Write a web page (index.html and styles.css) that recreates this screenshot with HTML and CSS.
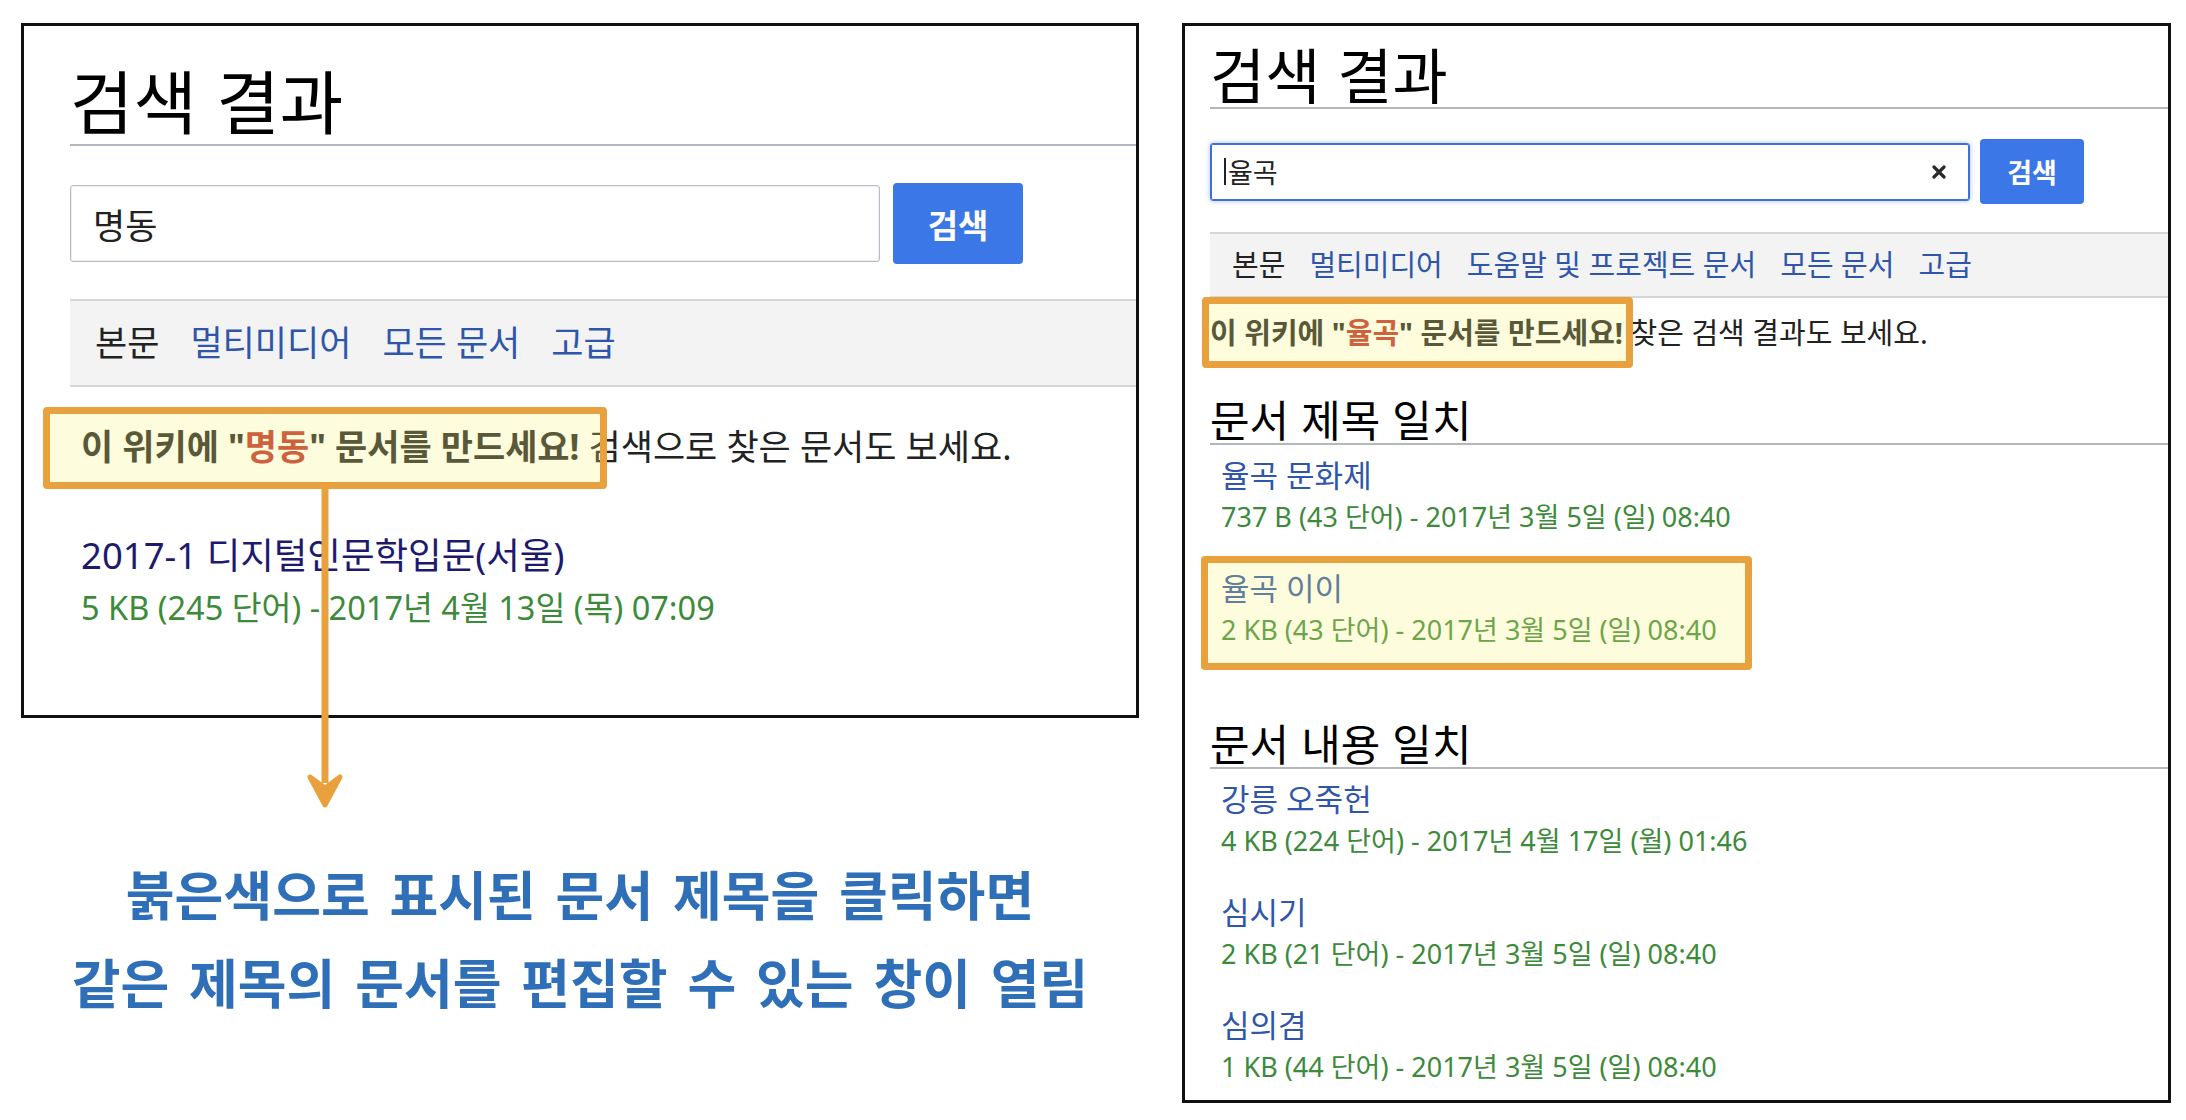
FILE: index.html
```html
<!DOCTYPE html>
<html lang="ko">
<head>
    <meta charset="UTF-8">
    <title>검색 결과 - 문서 만들기 안내</title>
    <link rel="stylesheet" href="styles.css">
</head>
<body>
    <div class="page">
        <!-- left: search with no exact match -->
        <div class="left-col">
            <div class="panel panel-lg">
                <h1 class="page-title">검색 결과</h1>
                <div class="search-row">
                    <div class="search-input"><span class="query">명동</span></div>
                    <div class="search-btn">검색</div>
                </div>
                <div class="tabs">
                    <span class="tab current">본문</span>
                    <a class="tab">멀티미디어</a>
                    <a class="tab">모든 문서</a>
                    <a class="tab">고급</a>
                </div>
                <p class="create-msg"><b class="mark">이 위키에 "<a class="new">명동</a>" 문서를 만드세요!</b> 검색으로 찾은 문서도 보세요.</p>
                <ul class="results">
                    <li>
                        <div class="result-heading"><a class="visited">2017-1 디지털인문학입문(서울)</a></div>
                        <div class="result-data">5 KB (245 단어) - 2017년 4월 13일 (목) 07:09</div>
                    </li>
                </ul>
            </div>

            <svg class="arrow" width="40" height="322" viewBox="0 0 40 322">
                <line x1="20" y1="0" x2="20" y2="296" stroke="#e8a13c" stroke-width="7"/>
                <path d="M20 318 L5 290 L20 301 L35 290 Z" fill="#e8a13c" stroke="#e8a13c" stroke-width="5" stroke-linejoin="round"/>
            </svg>

            <p class="caption">붉은색으로 표시된 문서 제목을 클릭하면<br>같은 제목의 문서를 편집할 수 있는 창이 열림</p>
        </div>

        <!-- right: search with title matches -->
        <div class="panel panel-sm">
            <h1 class="page-title">검색 결과</h1>
            <div class="search-row">
                <div class="search-input focused">
                    <span class="caret"></span><span class="query">율곡</span>
                    <svg class="clear" width="14" height="14" viewBox="0 0 14 14">
                        <path d="M2 2 L12 12 M12 2 L2 12" stroke="#2b2b2b" stroke-width="3.2" stroke-linecap="round"/>
                    </svg>
                </div>
                <div class="search-btn">검색</div>
            </div>
            <div class="tabs">
                <span class="tab current">본문</span>
                <a class="tab">멀티미디어</a>
                <a class="tab">도움말 및 프로젝트 문서</a>
                <a class="tab">모든 문서</a>
                <a class="tab">고급</a>
            </div>
            <p class="create-msg"><b class="mark">이 위키에 "<a class="new">율곡</a>" 문서를 만드세요!</b> 찾은 검색 결과도 보세요.</p>

            <h2 class="section-title">문서 제목 일치</h2>
            <ul class="results">
                <li>
                    <div class="result-heading"><a>율곡 문화제</a></div>
                    <div class="result-data">737 B (43 단어) - 2017년 3월 5일 (일) 08:40</div>
                </li>
                <li class="marked">
                    <div class="result-heading"><a>율곡 이이</a></div>
                    <div class="result-data">2 KB (43 단어) - 2017년 3월 5일 (일) 08:40</div>
                </li>
            </ul>

            <h2 class="section-title">문서 내용 일치</h2>
            <ul class="results">
                <li>
                    <div class="result-heading"><a>강릉 오죽헌</a></div>
                    <div class="result-data">4 KB (224 단어) - 2017년 4월 17일 (월) 01:46</div>
                </li>
                <li>
                    <div class="result-heading"><a>심시기</a></div>
                    <div class="result-data">2 KB (21 단어) - 2017년 3월 5일 (일) 08:40</div>
                </li>
                <li>
                    <div class="result-heading"><a>심의겸</a></div>
                    <div class="result-data">1 KB (44 단어) - 2017년 3월 5일 (일) 08:40</div>
                </li>
            </ul>
        </div>
    </div>
</body>
</html>
```

FILE: styles.css
```css
:root {
    --text-color: #222;
    --link-color: #2f56aa;
    --visited-color: #1d1a6e;
    --new-color: #c0302a;
    --data-color: #3c8a3a;
    --rule-color: #b3b8be;
    --button-color: #3b77e6;
    --mark-color: #e8a13c;
}

* {
    margin: 0;
    padding: 0;
    box-sizing: border-box;
}

body {
    background: #fff;
    color: var(--text-color);
    font-family: "Noto Sans", "Noto Sans CJK KR", sans-serif;
}

a {
    color: var(--link-color);
    text-decoration: none;
}

ul {
    list-style: none;
}

.page {
    display: flex;
    align-items: flex-start;
    gap: 43px;
    padding: 23px 0 0 21px;
}

.left-col {
    position: relative;
    width: 1118px;
}

.panel {
    border: 3px solid #111;
    overflow: hidden;
}

.page-title {
    font-family: "Noto Sans CJK KR", sans-serif;
    font-weight: 400;
    color: #000;
    border-bottom: 2px solid var(--rule-color);
}

.search-row {
    display: flex;
    align-items: center;
}

.search-input {
    display: flex;
    align-items: center;
    background: #fff;
    border: 1px solid #b9bec4;
    border-radius: 3px;
    box-shadow: inset 0 0 0 1px #eceef0;
}

.search-input.focused {
    border-color: #3f70d4;
    box-shadow: inset 0 0 0 1px #3f70d4, 0 0 5px rgba(63, 112, 212, 0.45);
}

.caret {
    width: 2px;
    height: 27px;
    background: #222;
    margin-right: 2px;
}

.clear {
    margin-left: auto;
    margin-right: 23px;
}

.search-btn {
    background: var(--button-color);
    color: #fff;
    font-weight: 700;
    border-radius: 4px;
    display: flex;
    align-items: center;
    justify-content: center;
}

.tabs {
    display: flex;
    background: #f3f3f3;
    border-top: 2px solid #d3d6da;
    border-bottom: 2px solid #d3d6da;
}

.tab.current {
    color: var(--text-color);
}

.create-msg .new {
    color: var(--new-color);
}

/* hand-drawn highlight boxes laid over the screenshot */
.mark {
    position: relative;
    display: inline-block;
    font-weight: 700;
}

.mark::after,
.results li.marked::after {
    content: '';
    position: absolute;
    border: 7px solid var(--mark-color);
    border-radius: 4px;
    background: rgba(247, 243, 120, 0.26);
}

.results li {
    position: relative;
}

.result-heading a.visited {
    color: var(--visited-color);
}

.result-data {
    color: var(--data-color);
}

.arrow {
    position: absolute;
    left: 284px;
    top: 464px;
    z-index: 2;
}

.caption {
    margin-top: 131px;
    text-align: center;
    font-family: "Noto Sans CJK KR", sans-serif;
    font-weight: 700;
    font-size: 53px;
    line-height: 88px;
    word-spacing: 5px;
    color: #2f6fb8;
}

/* left panel: larger zoom */
.panel-lg {
    height: 695px;
    padding: 28px 0 0 46px;
}

.panel-lg .page-title {
    font-size: 69px;
    line-height: 90px;
}

.panel-lg .search-row {
    margin-top: 37px;
    gap: 13px;
}

.panel-lg .search-input {
    width: 810px;
    height: 77px;
    padding-left: 22px;
    font-size: 35px;
}

.panel-lg .search-btn {
    width: 130px;
    height: 81px;
    font-size: 33px;
}

.panel-lg .tabs {
    margin-top: 35px;
    padding-left: 25px;
    gap: 31px;
    font-size: 35px;
    line-height: 84px;
}

.panel-lg .create-msg {
    margin-top: 35px;
    padding-left: 11px;
    font-size: 35px;
    line-height: 50px;
}

.panel-lg .mark::after {
    top: -15px;
    bottom: -17px;
    left: -38px;
    right: -28px;
}

.panel-lg .results {
    margin-top: 58px;
    padding-left: 11px;
}

.panel-lg .result-heading {
    font-size: 36.5px;
    line-height: 50px;
}

.panel-lg .result-data {
    font-size: 32.5px;
    line-height: 56px;
}

/* right panel */
.panel-sm {
    width: 989px;
    height: 1080px;
    padding: 12px 0 0 25px;
}

.panel-sm .page-title {
    font-size: 60px;
    line-height: 69px;
}

.panel-sm .search-row {
    margin-top: 30px;
    gap: 10px;
}

.panel-sm .search-input {
    width: 760px;
    height: 58px;
    padding-left: 13px;
    font-size: 27px;
}

.panel-sm .search-btn {
    width: 104px;
    height: 65px;
    font-size: 27px;
}

.panel-sm .tabs {
    margin-top: 28px;
    padding-left: 22px;
    gap: 24px;
    font-size: 29px;
    line-height: 62px;
}

.panel-sm .create-msg {
    margin-top: 14px;
    font-size: 29px;
    line-height: 42px;
}

.panel-sm .mark::after {
    top: -15px;
    bottom: -14px;
    left: -8px;
    right: -10px;
}

.section-title {
    margin-top: 39px;
    font-family: "Noto Sans CJK KR", sans-serif;
    font-weight: 400;
    font-size: 43px;
    line-height: 50px;
    color: #000;
    border-bottom: 2px solid var(--rule-color);
}

.panel-sm .results {
    margin: 9px 0 66px;
}

.panel-sm .results li {
    padding-left: 11px;
    margin-bottom: 29px;
}

.panel-sm .result-heading {
    font-size: 31px;
    line-height: 42px;
}

.panel-sm .result-data {
    font-size: 27px;
    line-height: 42px;
}

.results li.marked::after {
    top: -11px;
    bottom: -19px;
    left: -9px;
    width: 537px;
}
```
